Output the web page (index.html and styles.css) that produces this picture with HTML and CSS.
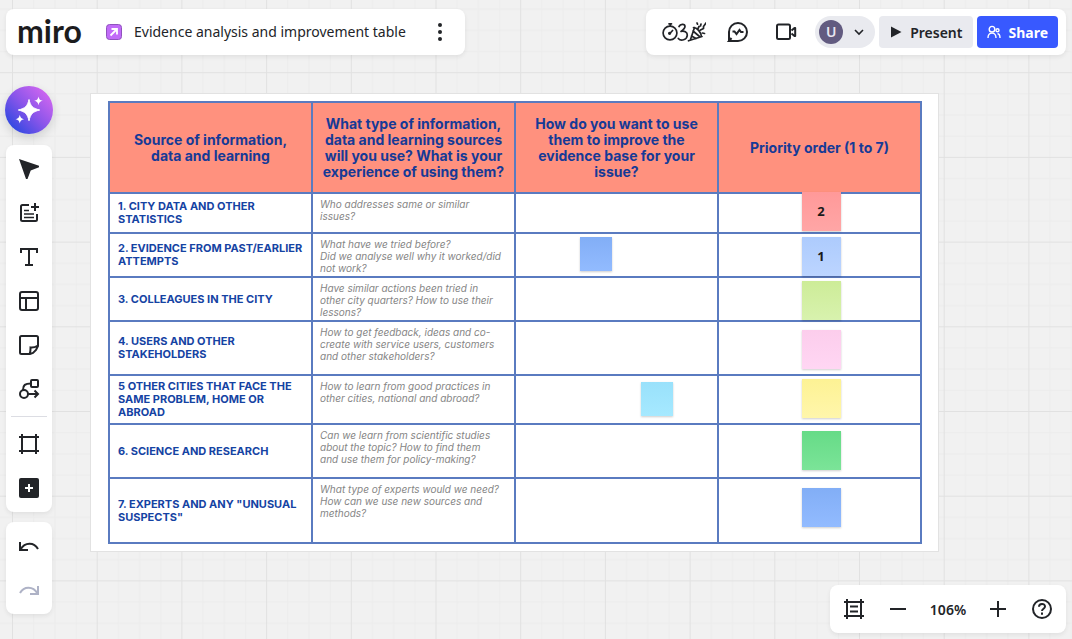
FILE: index.html
```html
<!DOCTYPE html>
<html lang="en">
<head>
    <meta charset="UTF-8">
    <meta name="viewport" content="width=device-width, initial-scale=1.0">
    <title>Evidence analysis and improvement table - Miro</title>
    <link rel="stylesheet" href="styles.css">
</head>
<body>
    <svg class="canvas-grid" aria-hidden="true">
        <defs>
            <pattern id="grid" x="12" y="-12.5" width="84.7" height="84.7" patternUnits="userSpaceOnUse">
                <path d="M21.7 0v84.7M42.9 0v84.7M64.1 0v84.7M0 21.7h84.7M0 42.9h84.7M0 64.1h84.7" stroke="#ececec"/>
                <path d="M.5 0v84.7M0 .5h84.7" stroke="#e1e1e1"/>
            </pattern>
        </defs>
        <rect width="100%" height="100%" fill="url(#grid)"/>
    </svg>

    <div class="page">
        <header class="topbar">
            <div class="panel board-info">
                <a class="logo" href="#">miro</a>
                <svg class="board-icon" width="16" height="16" viewBox="0 0 16 16">
                    <rect x=".5" y=".5" width="15" height="15" rx="3" fill="#c16bf8" stroke="#8f52bd"/>
                    <path d="M4.5 11.5l6-6M5.5 5h5.5v5.5" fill="none" stroke="#fff" stroke-width="1.8"/>
                </svg>
                <h1 class="board-title">Evidence analysis and improvement table</h1>
                <button class="icon-btn" aria-label="Main menu">
                    <svg width="24" height="24" viewBox="0 0 24 24" fill="#222428"><circle cx="12" cy="5" r="2"/><circle cx="12" cy="12" r="2"/><circle cx="12" cy="19" r="2"/></svg>
                </button>
            </div>

            <div class="panel actions">
                <button class="icon-btn wide" aria-label="Facilitation tools">
                    <svg width="44" height="24" viewBox="0 0 44 24" fill="none" stroke="#222428" stroke-width="1.7" stroke-linecap="round" stroke-linejoin="round">
                        <circle cx="8" cy="13" r="6.9"/><path d="M7 3.8h2.500M8.300 4v2M7.800 13.500l2.800-3"/><circle cx="7.600" cy="13.300" r=".8"/>
                        <path d="M17 6.500c1.500-3 6-2.500 6 0 0 2-2 3.500-4 5 3-1 6.500.5 6.300 3.800-.3 4.700-6.500 6.200-9 3.200"/>
                        <path d="M26.500 20.800L40 16.500M28.500 19.500l4-12M31.500 7.500c3.500 0 7.500 4.500 8 9M29.500 16l4.500 2.500M31 11l6.500 5.500M35.500 4.200l-.5-1.200M36 8.500l1-2M38.500 6l.5-2M38.500 10l3-1.500V6.500L44 3M40.500 13l2 .5"/>
                    </svg>
                </button>
                <button class="icon-btn" aria-label="Comments">
                    <svg width="24" height="24" viewBox="0 0 24 24" fill="none" stroke="#222428" stroke-width="2"><path d="M3 21v-9a9 9 0 1 1 9 9H3l2.500-3"/><path d="M6.500 11.500h2l2 2.500 3-4 1.500 2h2.500"/></svg>
                </button>
                <button class="icon-btn" aria-label="Video call">
                    <svg width="24" height="24" viewBox="0 0 24 24" fill="none" stroke="#222428" stroke-width="2" stroke-linejoin="round"><rect x="3" y="4.500" width="13" height="14.500" rx="1.500"/><path d="M17.500 10.500l3-2.500h.7v8h-.7l-3-2.500"/></svg>
                </button>
                <button class="user" aria-label="User menu">
                    <span class="avatar">U</span>
                    <svg width="16" height="16" viewBox="0 0 16 16" fill="none" stroke="#222428" stroke-width="1.600"><path d="M4 6l4 4 4-4"/></svg>
                </button>
                <button class="btn btn-present">
                    <svg width="12" height="12" viewBox="0 0 12 12"><path d="M1 .5L11.500 6 1 11.500z" fill="#222428"/></svg>
                    Present
                </button>
                <button class="btn btn-share">
                    <svg width="14" height="14" viewBox="0 0 14 14" fill="none" stroke="#fff" stroke-width="1.400"><circle cx="5" cy="4.200" r="2.800"/><path d="M1 13c0-6.500 8-6.500 8 0"/><circle cx="10.500" cy="5.300" r="1.500"/><path d="M10.500 8.700c1.700 0 2.500 1.500 2.500 4.300"/></svg>
                    Share
                </button>
            </div>
        </header>

        <nav class="sidebar" aria-label="Tools">
            <button class="ai-btn" aria-label="Create with AI">
                <svg width="28" height="28" viewBox="0 0 28 28" fill="#fff">
                    <path d="M14 3.500c1.600 6.600 3.300 8.700 10.700 10.500-7.400 1.800-9.100 4.100-10.700 10.700C12.400 18.100 10.700 15.800 3.300 14 10.700 12.200 12.400 10.100 14 3.500z" stroke="#fff" stroke-linejoin="round"/>
                    <path d="M23.500.5c.7 2.900 1.400 3.600 4.300 4.300-2.900.7-3.600 1.500-4.300 4.400-.7-2.900-1.400-3.700-4.300-4.400 2.900-.7 3.600-1.400 4.300-4.300z"/>
                    <path d="M4.800 18.800c.7 2.900 1.400 3.700 4.300 4.400-2.900.7-3.600 1.400-4.300 4.300-.7-2.900-1.400-3.600-4.300-4.300 2.900-.7 3.600-1.500 4.300-4.400z"/>
                </svg>
            </button>
            <div class="panel tools">
                <button class="tool" aria-label="Select">
                    <svg viewBox="0 0 24 24" fill="#222428"><path d="M2 2l20 6.700v1.500l-8.300 3.300-3.200 8.500H9z"/></svg>
                </button>
                <button class="tool" aria-label="Templates">
                    <svg viewBox="0 0 24 24" fill="none" stroke="#222428" stroke-width="2"><path d="M12 4H5.500Q4 4 4 5.500v13Q4 20 5.500 20h13q1.500 0 1.500-1.500V13"/><path d="M18 2v8M14 6h8"/><path d="M7 9.500h5M7 13h10M7 16.500h10" stroke-width="1.700"/></svg>
                </button>
                <button class="tool" aria-label="Text">
                    <svg viewBox="0 0 24 24" fill="none" stroke="#222428" stroke-width="2"><path d="M4 8V4h16v4M12 4v16M8 20h8"/></svg>
                </button>
                <button class="tool" aria-label="Table">
                    <svg viewBox="0 0 24 24" fill="none" stroke="#222428" stroke-width="2"><rect x="3" y="3" width="18" height="18" rx="2"/><path d="M3 9h18M9 9v12"/></svg>
                </button>
                <button class="tool" aria-label="Sticky note">
                    <svg viewBox="0 0 24 24" fill="none" stroke="#222428" stroke-width="2"><path d="M4.500 3h15Q21 3 21 4.500V13l-2 4-3 3-3 1H4.500Q3 21 3 19.500v-15Q3 3 4.500 3zM12.500 21c1-1.500 1-3.500 1-6.500Q17 15 21 12.500"/></svg>
                </button>
                <button class="tool" aria-label="Shapes and lines">
                    <svg viewBox="0 0 24 24" fill="none" stroke="#222428" stroke-width="2"><rect x="14" y="3" width="7" height="7" rx="1"/><circle cx="7" cy="17" r="4"/><path d="M14 6.500C8 6.500 6 8 6 13M11 17h10M17.500 13.500L21 17l-3.500 3.500"/></svg>
                </button>
                <hr class="divider">
                <button class="tool" aria-label="Frame">
                    <svg viewBox="0 0 24 24" fill="none" stroke="#222428" stroke-width="2"><path d="M5 2v20M19 2v20M2 5h20M2 19h20"/></svg>
                </button>
                <button class="tool" aria-label="More tools">
                    <svg viewBox="0 0 24 24"><rect x="2" y="2" width="20" height="20" rx="2" fill="#222428"/><path d="M12 8v8M8 12h8" stroke="#fff" stroke-width="2"/></svg>
                </button>
            </div>
            <div class="panel tools">
                <button class="tool" aria-label="Undo">
                    <svg viewBox="0 0 24 24" fill="none" stroke="#222428" stroke-width="2"><path d="M3 8v8h8M3.500 15.500C8 8 17 8 21 15"/></svg>
                </button>
                <button class="tool" aria-label="Redo" disabled>
                    <svg viewBox="0 0 24 24" fill="none" stroke="#aeb2c6" stroke-width="2"><path d="M21 8v8h-8M20.500 15.500C16 8 7 8 3 15"/></svg>
                </button>
            </div>
        </nav>

        <main class="board">
            <table class="evidence">
                <thead>
                    <tr>
                        <th>Source of information,<br>data and learning</th>
                        <th>What type of information,<br>data and learning sources<br>will you use? What is your<br>experience of using them?</th>
                        <th>How do you want to use<br>them to improve the<br>evidence base for your<br>issue?</th>
                        <th>Priority order (1 to 7)</th>
                    </tr>
                </thead>
                <tbody>
                    <tr class="row-xs">
                        <td class="source">1. CITY DATA AND OTHER<br>STATISTICS</td>
                        <td class="hint">Who addresses same or similar<br>issues?</td>
                        <td></td>
                        <td><div class="note priority red">2</div></td>
                    </tr>
                    <tr class="row-s">
                        <td class="source">2. EVIDENCE FROM PAST/EARLIER<br>ATTEMPTS</td>
                        <td class="hint">What have we tried before?<br>Did we analyse well why it worked/did<br>not work?</td>
                        <td><div class="note small blue tried"></div></td>
                        <td><div class="note priority light-blue">1</div></td>
                    </tr>
                    <tr class="row-s">
                        <td class="source">3. COLLEAGUES IN THE CITY</td>
                        <td class="hint">Have similar actions been tried in<br>other city quarters? How to use their<br>lessons?</td>
                        <td></td>
                        <td><div class="note priority lime"></div></td>
                    </tr>
                    <tr class="row-l">
                        <td class="source">4. USERS AND OTHER<br>STAKEHOLDERS</td>
                        <td class="hint">How to get feedback, ideas and co-<br>create with service users, customers<br>and other stakeholders?</td>
                        <td></td>
                        <td><div class="note priority pink"></div></td>
                    </tr>
                    <tr class="row-m">
                        <td class="source">5 OTHER CITIES THAT FACE THE<br>SAME PROBLEM, HOME OR<br>ABROAD</td>
                        <td class="hint">How to learn from good practices in<br>other cities, national and abroad?</td>
                        <td><div class="note small cyan cities"></div></td>
                        <td><div class="note priority yellow"></div></td>
                    </tr>
                    <tr class="row-l">
                        <td class="source">6. SCIENCE AND RESEARCH</td>
                        <td class="hint">Can we learn from scientific studies<br>about the topic? How to find them<br>and use them for policy-making?</td>
                        <td></td>
                        <td><div class="note priority green"></div></td>
                    </tr>
                    <tr class="row-xl">
                        <td class="source">7. EXPERTS AND ANY "UNUSUAL<br>SUSPECTS"</td>
                        <td class="hint">What type of experts would we need?<br>How can we use new sources and<br>methods?</td>
                        <td></td>
                        <td><div class="note priority blue"></div></td>
                    </tr>
                </tbody>
            </table>
        </main>

        <div class="panel zoom">
            <button class="icon-btn" aria-label="Frames">
                <svg width="24" height="24" viewBox="0 0 24 24" fill="none" stroke="#222428" stroke-width="2"><path d="M5 2v20M19 2v20M2 5h20M2 19h20M8 9.500h8M8 14.500h8"/></svg>
            </button>
            <button class="icon-btn" aria-label="Zoom out">
                <svg width="24" height="24" viewBox="0 0 24 24" stroke="#222428" stroke-width="2"><path d="M4 12h16"/></svg>
            </button>
            <button class="zoom-level">106%</button>
            <button class="icon-btn" aria-label="Zoom in">
                <svg width="24" height="24" viewBox="0 0 24 24" stroke="#222428" stroke-width="2"><path d="M4 12h16M12 4v16"/></svg>
            </button>
            <button class="icon-btn" aria-label="Help">
                <svg width="24" height="24" viewBox="0 0 24 24" fill="none" stroke="#222428" stroke-width="2"><circle cx="12" cy="12" r="9"/><path d="M9 9.800c0-3.800 6-3.800 6-.3 0 2.200-3 2.200-3 4.500"/><path d="M12 15.500v2.200"/></svg>
            </button>
        </div>
    </div>
</body>
</html>
```
FILE: styles.css
```css
* {
    box-sizing: border-box;
}
body {
    margin: 0;
    background-color: #f1f1f1;
    font-family: "Noto Sans", "Open Sans", sans-serif;
    color: #222428;
}
button {
    margin: 0;
    padding: 0;
    border: none;
    background: none;
    font-family: inherit;
    color: inherit;
    cursor: pointer;
}
svg {
    display: block;
    flex: none;
}
.canvas-grid {
    position: absolute;
    inset: 0;
    width: 100%;
    height: 100%;
}
.page {
    position: relative;
    display: grid;
    grid-template-columns: 48px 1fr;
    grid-template-rows: auto auto 1fr;
    min-height: 100vh;
    padding: 9px 6px 6px 5px;
}
.panel {
    background: white;
    border-radius: 8px;
    box-shadow: 0 2px 4px rgba(34, 36, 40, 0.08);
}

/* top bar */
.topbar {
    grid-column: 1 / 3;
    display: flex;
    justify-content: space-between;
    padding-left: 1px;
}
.board-info {
    display: flex;
    align-items: center;
    height: 46px;
    padding: 0 9px 0 11px;
}
.logo {
    width: 66px;
    padding-bottom: 3px;
    font-family: Lato, sans-serif;
    font-size: 32px;
    line-height: 40px;
    font-weight: 700;
    color: #1c1c1e;
    text-decoration: none;
}
.board-icon {
    margin-left: 23px;
}
.board-title {
    margin: 0 18px 0 12px;
    font-size: 14px;
    line-height: 20px;
    font-weight: 400;
}
.icon-btn {
    display: flex;
    align-items: center;
    justify-content: center;
    width: 32px;
    height: 32px;
}
.icon-btn.wide {
    width: 44px;
}
.actions {
    display: flex;
    align-items: center;
    height: 46px;
    padding: 0 8px 0 16px;
}
.actions .icon-btn {
    margin-right: 16px;
}
.user {
    display: flex;
    align-items: center;
    gap: 8px;
    width: 60px;
    height: 32px;
    margin-left: -3px;
    padding-left: 4px;
    border-radius: 16px;
    background: #e9eaef;
}
.avatar {
    width: 24px;
    height: 24px;
    border-radius: 50%;
    background: #625b80;
    color: #e9e7f0;
    font-size: 14px;
    line-height: 24px;
    font-weight: 600;
}
.btn {
    display: flex;
    align-items: center;
    height: 32px;
    margin-left: 4px;
    padding: 0 11px;
    border-radius: 4px;
    font-size: 14px;
    font-weight: 600;
    gap: 8px;
}
.btn-present {
    background: #e9eaef;
}
.btn-share {
    padding: 0 10px;
    gap: 7px;
    background: #3859ff;
    color: white;
    font-weight: 700;
}

/* left side */
.sidebar {
    grid-row: 2 / 4;
    display: flex;
    flex-direction: column;
    align-items: center;
    padding-top: 31px;
}
.ai-btn {
    display: flex;
    align-items: center;
    justify-content: center;
    width: 48px;
    height: 48px;
    margin-bottom: 11px;
    border-radius: 50%;
    background: linear-gradient(45deg, #2447e0 8%, #8a55ea 50%, #d768f0 92%);
    box-shadow: 0 4px 10px rgba(34, 36, 40, 0.16);
}
.tools {
    width: 46px;
    margin-bottom: 10px;
    padding: 2px 0;
}
.tool {
    display: flex;
    align-items: center;
    justify-content: center;
    width: 100%;
    height: 44px;
}
.tool svg {
    width: 24px;
    height: 24px;
}
.divider {
    margin: 5px;
    border: none;
    border-top: 1px solid #dcdde3;
}

/* board */
.board {
    margin: 38px 127px 0 37px;
    padding: 7px 16px 7px 17px;
    background: white;
    border: 1px solid #e2e2e2;
}
.evidence {
    width: 100%;
    table-layout: fixed;
    border-collapse: collapse;
    font-family: Inter, sans-serif;
}
.evidence th,
.evidence td {
    position: relative;
    border: 2px solid #5a7bc0;
    padding: 0 8px;
}
.evidence th {
    height: 91px;
    padding: 0;
    background: #ff917e;
    color: #163a96;
    font-size: 14px;
    line-height: 16px;
    font-weight: 700;
}
.source {
    color: #1543a3;
    font-size: 11px;
    line-height: 13px;
    font-weight: 700;
    white-space: nowrap;
}
.evidence .hint {
    padding: 4px 0 0 7px;
    vertical-align: top;
    color: #858585;
    font-size: 10px;
    line-height: 12px;
    font-style: italic;
    white-space: nowrap;
}
.row-xs {
    height: 40px;
}
.row-s {
    height: 44px;
}
.row-m {
    height: 49px;
}
.row-l {
    height: 54px;
}
.row-xl {
    height: 65px;
}

/* sticky notes */
.note {
    position: absolute;
    z-index: 1;
    box-shadow: 0 1px 2px rgba(0, 0, 0, 0.2);
}
.priority {
    top: 3px;
    left: calc(50% - 18px);
    width: 39px;
    height: 39px;
    text-align: center;
    color: #1a1a1a;
    font-family: "Noto Sans", sans-serif;
    font-size: 13px;
    line-height: 38px;
    font-weight: 700;
}
.small {
    top: 3px;
    width: 32px;
    height: 34px;
}
.tried {
    left: 32%;
}
.cities {
    left: 62%;
}
.red {
    top: -2px;
    background: linear-gradient(#ff9999, #ffa6a6);
}
.light-blue {
    background: linear-gradient(#adcbfd, #bcd5ff);
}
.lime {
    background: linear-gradient(#cdec98, #d8f2ae);
}
.pink {
    top: 8px;
    background: linear-gradient(#fccdec, #ffd6f3);
}
.yellow {
    background: linear-gradient(#fdf294, #fff6ab);
}
.green {
    top: 6px;
    background: linear-gradient(#66db87, #7be498);
}
.blue {
    background: linear-gradient(#82aef6, #92bbff);
}
.priority.blue {
    top: 9px;
}
.cyan {
    top: 6px;
    background: linear-gradient(#99e1fb, #a6e9ff);
}

/* zoom controls */
.zoom {
    align-self: end;
    justify-self: end;
    display: flex;
    align-items: center;
    height: 48px;
    padding: 0 8px;
}
.zoom .icon-btn {
    width: 44px;
}
.zoom .icon-btn:first-child,
.zoom .icon-btn:last-child {
    width: 32px;
}
.zoom .icon-btn:first-child {
    margin-right: 6px;
}
.zoom .icon-btn:last-child {
    margin-left: 6px;
}
.zoom-level {
    width: 56px;
    height: 32px;
    font-size: 14px;
    font-weight: 600;
}
```
